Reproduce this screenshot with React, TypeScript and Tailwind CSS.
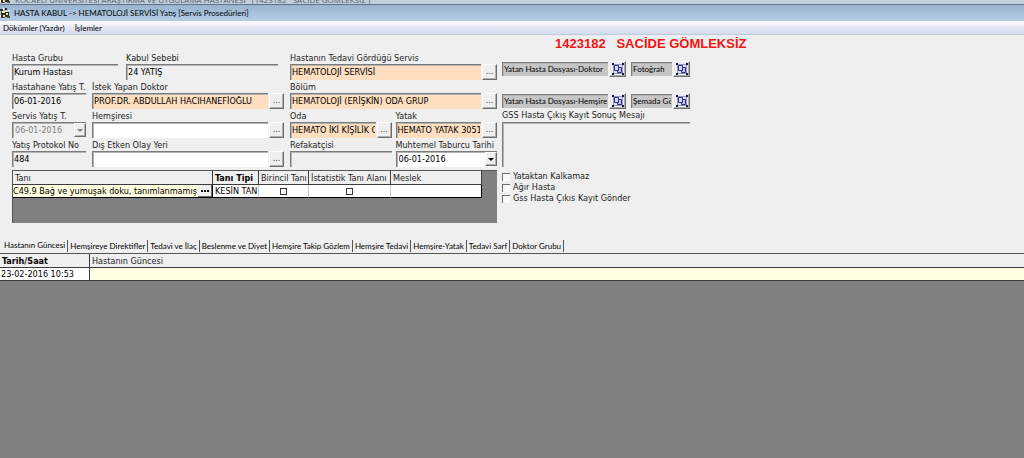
import { useState } from 'react';
import type { ReactNode } from 'react';

const TABS = [
  'Hastanın Güncesi',
  'Hemşireye Direktifler',
  'Tedavi ve İlaç',
  'Beslenme ve Diyet',
  'Hemşire Takip Gözlem',
  'Hemşire Tedavi',
  'Hemşire-Yatak',
  'Tedavi Sarf',
  'Doktor Grubu',
];

const FLAGS = ['Yataktan Kalkamaz', 'Ağır Hasta', 'Gss Hasta Çıkıs Kayıt Gönder'];

const SUNKEN = 'border-t border-l border-t-[#7b7b7b] border-l-[#7b7b7b] shadow-[inset_1px_1px_0_#b4b4b4]';
const RAISED =
  'border border-t-white border-l-white border-r-[#6c6c6c] border-b-[#6c6c6c] bg-[#efefef] shadow-[inset_-1px_-1px_0_#b0b0b0]';

const TONES = {
  plain: 'bg-[#efefef]',
  white: 'bg-white',
  peach: 'bg-[#ffdfbf]',
};

function AppIcon() {
  return (
    <svg viewBox="0 0 11 12" className="h-3 w-[11px] shrink-0" aria-hidden="true">
      <path d="M0 2h3v2H0zM5 1h2v2H5zM1 5h8v5H1z" fill="#2d2d26" />
      <path d="M2 4h3v2H2zM6 6h2v2H6zM3 8h2v2H3z" fill="#e9e58c" />
      <path d="M3 1h1v2H3zM8 3h2v1H8zM0 8h1v2H0zM5 4h2v1H5z" fill="#fff" />
      <path d="M7 9h3v2H7zM1 10h4v1H1z" fill="#4f4d38" />
    </svg>
  );
}

function GroupIcon() {
  return (
    <svg viewBox="0 0 12 12" className="h-3 w-3" aria-hidden="true">
      <path d="M1.5 1.5h9v9h-9z" fill="#dcdcf0" stroke="#9a9ac4" />
      <path d="M5.5 4.5h4v5h-4z" fill="#c3c3f0" stroke="#2c2c78" />
      <path d="M2.5 2.5h4v5h-4z" fill="#d8d8fa" stroke="#2c2c78" />
      <path d="M0 0h2v2H0zM10 0h2v2h-2zM0 10h2v2H0zM10 10h2v2h-2z" fill="#15154e" />
    </svg>
  );
}

function DotsButton({ label }: { label: string }) {
  return (
    <button
      type="button"
      aria-label={`${label} seç`}
      className={`flex h-4 w-[15px] shrink-0 items-center justify-center text-[#444] ${RAISED}`}
    >
      ...
    </button>
  );
}

type FieldProps = {
  id: string;
  label: string;
  value?: string;
  tone?: keyof typeof TONES;
  lookup?: boolean;
  className?: string;
};

function Field({ id, label, value = '', tone = 'plain', lookup = false, className = '' }: FieldProps) {
  return (
    <div className={className}>
      <label htmlFor={id} className="block h-[11px] leading-[11px] whitespace-nowrap">
        {label}
      </label>
      <div className="flex gap-px">
        <input
          id={id}
          type="text"
          defaultValue={value}
          className={`h-4 w-full min-w-0 flex-1 px-px pb-0.5 text-black outline-none ${SUNKEN} ${TONES[tone]}`}
        />
        {lookup ? <DotsButton label={label} /> : null}
      </div>
    </div>
  );
}

type DateFieldProps = {
  id: string;
  label: string;
  value: string;
  disabled?: boolean;
  className?: string;
};

function DateField({ id, label, value, disabled = false, className = '' }: DateFieldProps) {
  return (
    <div className={className}>
      <label htmlFor={id} className="block h-[11px] leading-[11px] whitespace-nowrap">
        {label}
      </label>
      <div className="relative">
        <select
          id={id}
          disabled={disabled}
          defaultValue={value}
          className={`block h-4 w-full appearance-none px-0.5 opacity-100 outline-none ${SUNKEN} ${
            disabled ? 'bg-[#efefef] text-[#808080]' : 'bg-white text-black'
          }`}
        >
          <option>{value}</option>
        </select>
        <span
          className={`pointer-events-none absolute right-0 bottom-px flex h-3.5 w-3 items-center justify-center ${RAISED} ${
            disabled ? 'text-[#808080]' : 'text-black'
          }`}
        >
          <svg viewBox="0 0 6 3" className="h-[3px] w-1.5" aria-hidden="true">
            <path d="M0 0h6L3 3z" fill="currentColor" />
          </svg>
        </span>
      </div>
    </div>
  );
}

function FileLink({ label, className }: { label: string; className: string }) {
  return (
    <div className="flex items-center gap-px">
      <input
        type="text"
        readOnly
        aria-label={label}
        defaultValue={label}
        className={`h-3.5 bg-[#c6c6c6] px-px pb-px font-['Lato',sans-serif] text-[8px] text-black outline-none ${SUNKEN} ${className}`}
      />
      <button
        type="button"
        aria-label={`${label} aç`}
        className={`flex h-4 w-[17px] shrink-0 items-center justify-center ${RAISED}`}
      >
        <GroupIcon />
      </button>
    </div>
  );
}

type HeadCellProps = { children: ReactNode; bold?: boolean; last?: boolean };

function HeadCell({ children, bold = false, last = false }: HeadCellProps) {
  return (
    <th
      className={`h-3.5 border-b border-[#3c3c3c] px-0.5 py-0 text-left ${last ? '' : 'border-r'} ${
        bold ? 'font-bold text-black' : 'font-normal'
      }`}
    >
      {children}
    </th>
  );
}

function CheckCell({ label }: { label: string }) {
  return (
    <td className="border-r border-b border-r-[#c8c8c8] border-b-black p-0">
      <input
        type="checkbox"
        aria-label={label}
        className="mx-auto block size-[7px] appearance-none border border-[#333] bg-white checked:bg-[#333]"
      />
    </td>
  );
}

function DiagnosisTable() {
  return (
    <div className="h-[53px] border-t border-l border-[#555] bg-[#808080]">
      <table className="w-[469px] table-fixed border-separate border-spacing-0 whitespace-nowrap leading-3">
        <colgroup>
          <col className="w-[200px]" />
          <col className="w-[46px]" />
          <col className="w-[50px]" />
          <col className="w-[82px]" />
          <col />
        </colgroup>
        <thead className="bg-[#efefef]">
          <tr>
            <HeadCell>Tanı</HeadCell>
            <HeadCell bold>Tanı Tipi</HeadCell>
            <HeadCell>Birincil Tanı</HeadCell>
            <HeadCell>İstatistik Tanı Alanı</HeadCell>
            <HeadCell>Meslek</HeadCell>
          </tr>
        </thead>
        <tbody className="bg-white text-black">
          <tr>
            <td className="border-r border-b border-black bg-[#ffffe1] p-0">
              <div className="flex h-3 items-center justify-between">
                <span>C49.9 Bağ ve yumuşak doku, tanımlanmamış</span>
                <button
                  type="button"
                  aria-label="Tanı seç"
                  className="flex h-3 w-3.5 items-center justify-center gap-px border-r border-b border-[#6c6c6c] bg-[#efefef]"
                >
                  <span className="size-0.5 bg-black" />
                  <span className="size-0.5 bg-black" />
                  <span className="size-0.5 bg-black" />
                </button>
              </div>
            </td>
            <td className="overflow-hidden border-r border-b border-r-[#c8c8c8] border-b-black px-0.5 py-0">
              KESİN TAN
            </td>
            <CheckCell label="Birincil Tanı" />
            <CheckCell label="İstatistik Tanı Alanı" />
            <td className="border-r border-b border-black p-0" />
          </tr>
        </tbody>
      </table>
    </div>
  );
}

export default function App() {
  const [tab, setTab] = useState(TABS[0]);

  return (
    <div className="flex min-h-screen flex-col bg-[#efefef] font-['DejaVu_Sans_Condensed','DejaVu_Sans',sans-serif] text-[9px] text-[#1c1c1c]">
      {/* Parent window title, mostly hidden behind this one */}
      <div className="flex h-[5px] items-end gap-1 overflow-hidden border-b border-[#5d738c] bg-[#c3cfdd] font-['Open_Sans',sans-serif] text-[8px] leading-[9px] whitespace-pre text-[#555c66]">
        <AppIcon />
        <span>KOCAELİ ÜNİVERSİTESİ ARAŞTIRMA VE UYGULAMA HASTANESİ   [1423182   SACİDE GÖMLEKSİZ ]</span>
      </div>

      <header className="flex h-4 items-center gap-[3px] bg-linear-to-b from-[#9ab4d0] to-[#b4cee9] font-['Lato',sans-serif] text-[8px] text-black">
        <AppIcon />
        <h1>HASTA KABUL -&gt; HEMATOLOJİ SERVİSİ Yatış [Servis Prosedürleri]</h1>
      </header>

      <nav className="flex h-3.5 items-center gap-2.5 border-b border-[#bccbdc] bg-linear-to-b from-white via-[#e4e8f4] to-[#d6dced] px-[3px] font-['Lato',sans-serif] text-[8px] text-black">
        <button type="button">Dökümler (Yazdır)</button>
        <button type="button">İşlemler</button>
      </nav>

      <h2 className="h-[18px] pl-[555px] font-['Liberation_Sans',sans-serif] text-[13px] leading-[18px] font-bold whitespace-pre text-[#f01414]">
        1423182   SACİDE GÖMLEKSİZ
      </h2>

      <main className="flex gap-[5px] pl-3">
        <div className="flex w-[485px] shrink-0 flex-col gap-[3px]">
          <div className="flex gap-1.5">
            <div className="flex w-[272px] flex-col gap-0.5">
              <div className="flex gap-2 pr-1.5">
                <Field id="hasta-grubu" label="Hasta Grubu" value="Kurum Hastası" className="w-[106px]" />
                <Field id="kabul-sebebi" label="Kabul Sebebi" value="24 YATIŞ" className="flex-1" />
              </div>
              <div className="flex gap-1.5">
                <Field id="hastahane-yatis" label="Hastahane Yatış T." value="06-01-2016" className="w-[74px]" />
                <Field
                  id="doktor"
                  label="İstek Yapan Doktor"
                  value="PROF.DR. ABDULLAH HACIHANEFİOĞLU"
                  tone="peach"
                  lookup
                  className="flex-1"
                />
              </div>
              <div className="flex gap-1.5">
                <DateField id="servis-yatis" label="Servis Yatış T." value="06-01-2016" disabled className="w-[74px]" />
                <Field id="hemsire" label="Hemşiresi" tone="white" lookup className="flex-1" />
              </div>
              <div className="flex gap-1.5">
                <Field id="protokol" label="Yatış Protokol No" value="484" className="w-[74px]" />
                <Field id="dis-etken" label="Dış Etken Olay Yeri" tone="white" lookup className="flex-1" />
              </div>
            </div>

            <div className="flex flex-1 flex-col gap-0.5">
              <Field id="servis" label="Hastanın Tedavi Gördüğü Servis" value="HEMATOLOJİ SERVİSİ" tone="peach" lookup />
              <Field id="bolum" label="Bölüm" value="HEMATOLOJİ (ERİŞKİN) ODA GRUP" tone="peach" lookup />
              <div className="grid grid-cols-2 gap-1">
                <Field id="oda" label="Oda" value="HEMATO İKİ KİŞİLİK ODA" tone="peach" lookup />
                <Field id="yatak" label="Yatak" value="HEMATO YATAK 3051" tone="peach" lookup />
              </div>
              <div className="grid grid-cols-2 gap-1">
                <Field id="refakatci" label="Refakatçisi" />
                <DateField id="taburcu" label="Muhtemel Taburcu Tarihi" value="06-01-2016" />
              </div>
            </div>
          </div>

          <DiagnosisTable />
        </div>

        <div className="flex w-[188px] flex-col pt-2">
          <div className="flex flex-col gap-4">
            <div className="flex gap-[5px]">
              <FileLink label="Yatan Hasta Dosyası-Doktor" className="w-[106px]" />
              <FileLink label="Fotoğrafı" className="w-[41px]" />
            </div>
            <div className="flex gap-[5px]">
              <FileLink label="Yatan Hasta Dosyası-Hemşire" className="w-[106px]" />
              <FileLink label="Şemada Gö" className="w-[41px]" />
            </div>
          </div>

          <label htmlFor="gss-mesaj" className="mt-px block h-[11px] leading-[11px]">
            GSS Hasta Çıkış Kayıt Sonuç Mesajı
          </label>
          <textarea
            id="gss-mesaj"
            className={`mt-px block h-[45px] w-full resize-none bg-[#efefef] outline-none ${SUNKEN}`}
          />

          <div className="mt-1 flex flex-col">
            {FLAGS.map((flag) => (
              <label key={flag} className="flex h-[11px] items-center gap-[3px] whitespace-nowrap">
                <input
                  type="checkbox"
                  className="size-2 appearance-none border-t border-l border-[#6f6f6f] bg-[#fafafa] checked:bg-[#444]"
                />
                {flag}
              </label>
            ))}
          </div>
        </div>
      </main>

      <div
        role="tablist"
        className="mt-4 flex h-[15px] items-center border-b border-[#555] pl-0.5 font-['Lato',sans-serif] text-[8px] text-black"
      >
        {TABS.map((name) => (
          <button
            key={name}
            type="button"
            role="tab"
            aria-selected={tab === name}
            onClick={() => setTab(name)}
            className="flex h-3 items-center border-r border-[#555] px-0.5 leading-none whitespace-nowrap aria-selected:pb-0.5"
          >
            {name}
          </button>
        ))}
      </div>

      <section className="flex-1 bg-[#808080]">
        <table className="w-full table-fixed border-separate border-spacing-0 leading-3">
          <colgroup>
            <col className="w-[90px]" />
            <col />
          </colgroup>
          <thead className="bg-[#efefef]">
            <tr>
              <HeadCell bold>Tarih/Saat</HeadCell>
              <HeadCell last>Hastanın Güncesi</HeadCell>
            </tr>
          </thead>
          <tbody className="text-black">
            <tr>
              <td className="h-[13px] border-r border-b border-[#3c3c3c] bg-white px-px py-0">23-02-2016 10:53</td>
              <td className="border-b border-[#3c3c3c] bg-[#ffffe1] p-0" />
            </tr>
          </tbody>
        </table>
      </section>
    </div>
  );
}
